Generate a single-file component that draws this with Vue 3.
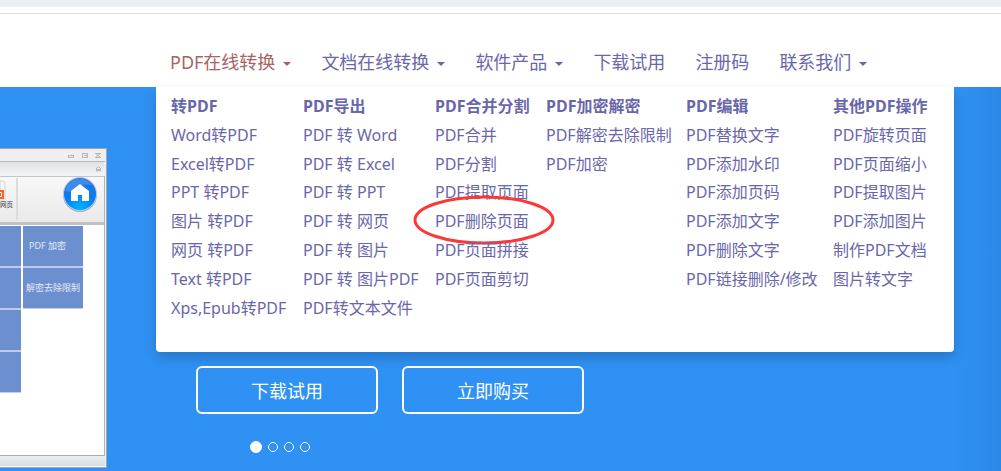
<script setup>
const navItems = [
  { label: 'PDF在线转换', caret: true, active: true },
  { label: '文档在线转换', caret: true },
  { label: '软件产品', caret: true },
  { label: '下载试用' },
  { label: '注册码' },
  { label: '联系我们', caret: true },
]

const columns = [
  {
    title: '转PDF',
    items: ['Word转PDF', 'Excel转PDF', 'PPT 转PDF', '图片 转PDF', '网页 转PDF', 'Text 转PDF', 'Xps,Epub转PDF'],
  },
  {
    title: 'PDF导出',
    items: ['PDF 转 Word', 'PDF 转 Excel', 'PDF 转 PPT', 'PDF 转 网页', 'PDF 转 图片', 'PDF 转 图片PDF', 'PDF转文本文件'],
  },
  {
    title: 'PDF合并分割',
    items: ['PDF合并', 'PDF分割', 'PDF提取页面', 'PDF删除页面', 'PDF页面拼接', 'PDF页面剪切'],
  },
  { title: 'PDF加密解密', items: ['PDF解密去除限制', 'PDF加密'] },
  {
    title: 'PDF编辑',
    items: ['PDF替换文字', 'PDF添加水印', 'PDF添加页码', 'PDF添加文字', 'PDF删除文字', 'PDF链接删除/修改'],
  },
  {
    title: '其他PDF操作',
    items: ['PDF旋转页面', 'PDF页面缩小', 'PDF提取图片', 'PDF添加图片', '制作PDF文档', '图片转文字'],
  },
]

const marked = 'PDF删除页面'
</script>

<template>
  <div class="page">
    <div class="topbar"></div>
    <header class="header">
      <nav class="nav">
        <a
          v-for="item in navItems"
          :key="item.label"
          href="#"
          class="nav-link"
          :class="{ active: item.active }"
        >{{ item.label }}<span v-if="item.caret" class="caret"></span></a>
        <div class="menu">
          <section v-for="col in columns" :key="col.title" class="menu-col">
            <h3 class="menu-title">{{ col.title }}</h3>
            <ul class="menu-list">
              <li v-for="item in col.items" :key="item" class="menu-item">
                <a href="#">{{ item }}</a>
                <svg v-if="item === marked" class="ring" width="142" height="50" viewBox="0 0 142 50" aria-hidden="true">
                  <ellipse cx="71" cy="25" rx="69" ry="23" fill="none" stroke="#fa3a38" stroke-width="3" />
                </svg>
              </li>
            </ul>
          </section>
        </div>
      </nav>
    </header>

    <main class="hero">
      <svg class="app-shot" width="107" height="320" viewBox="0 0 107 320" aria-hidden="true">
        <defs>
          <linearGradient id="strip" x1="0" y1="0" x2="0" y2="1">
            <stop offset="0" stop-color="#dfe2e6" />
            <stop offset="1" stop-color="#f4f5f7" />
          </linearGradient>
          <linearGradient id="tool" x1="0" y1="0" x2="0" y2="1">
            <stop offset="0" stop-color="#f8f8f8" />
            <stop offset="1" stop-color="#e9e9ea" />
          </linearGradient>
          <linearGradient id="status" x1="0" y1="0" x2="0" y2="1">
            <stop offset="0" stop-color="#e9edf0" />
            <stop offset="1" stop-color="#d8dfe4" />
          </linearGradient>
          <radialGradient id="ball" cx="0.5" cy="0.95" r="0.85">
            <stop offset="0" stop-color="#00b4ff" />
            <stop offset="0.6" stop-color="#0a7cf2" />
            <stop offset="1" stop-color="#1c74e4" />
          </radialGradient>
        </defs>
        <rect width="107" height="320" fill="#a3a7a9" />
        <rect y="1" width="106" height="318" fill="#efefef" />
        <rect y="13" width="105" height="1" fill="#b5b8bd" />
        <rect y="14" width="104" height="14" fill="url(#strip)" />
        <rect y="28" width="104" height="1" fill="#c3c5c9" />
        <rect y="29" width="104" height="46" fill="url(#tool)" />
        <rect x="16" y="30" width="2" height="42" fill="#dcdcdc" />
        <rect y="74" width="105" height="3" fill="#bfc1c5" />
        <rect y="77" width="104" height="230" fill="#fff" />
        <rect x="104" y="28" width="1" height="280" fill="#b2b4b5" />
        <rect y="307" width="105" height="1" fill="#a9aca8" />
        <rect y="308" width="105" height="10" fill="url(#status)" />
        <rect y="318" width="106" height="1" fill="#f7f7f7" />
        <g fill="none" stroke="#b4b5b7">
          <rect x="68.5" y="7.5" width="5" height="2" />
          <rect x="82.5" y="5.5" width="5" height="4" />
          <path d="M84 7.500h3M95.500 5.500l5 4M100.500 5.500l-5 4M95 5.500h6M95 9.500h6" />
          <path d="M96 21l2.500-2.500 2.500 2.500M96 21.500h5M96.500 21v2h1.500v-1.500h1v1.500h1.500v-2" />
        </g>
        <path d="M0 33h2q3 0 3 3v16H0z" fill="#f9f9f9" stroke="#d2d3d4" />
        <path d="M0 42h4v9H0z" fill="#ef6427" />
        <path d="M0 44.500h1.500v4H0" fill="none" stroke="#fff" />
        <text x="0" y="59" font-size="6.500" fill="#333">网页</text>
        <circle cx="80" cy="47" r="17" fill="#84909c" opacity="0.7" />
        <circle cx="80" cy="46" r="17" fill="#b5cbe6" />
        <circle cx="80" cy="46" r="16" fill="url(#ball)" />
        <path d="M65 43a15 15 0 0 1 27-6q-10-2-15 3t-12 3z" fill="#fff" opacity="0.17" />
        <path d="M80 36l9 7v10h-7v-6h-4v6h-7V43z" fill="#fff" />
        <g fill="#c0cdea">
          <rect y="78" width="21" height="41" />
          <rect y="119" width="21" height="42" />
          <rect y="161" width="21" height="42" />
          <rect y="203" width="21" height="42" />
          <rect x="23" y="78" width="60" height="41" />
          <rect x="23" y="119" width="60" height="42" />
        </g>
        <g fill="#6c90cf">
          <rect y="78" width="21" height="40" />
          <rect y="120" width="21" height="40" />
          <rect y="162" width="21" height="40" />
          <rect y="204" width="21" height="40" />
          <rect x="23" y="78" width="60" height="40" />
          <rect x="23" y="120" width="60" height="40" />
        </g>
        <g font-size="9" fill="#e3eaf8">
          <text x="29" y="101">PDF 加密</text>
          <text x="26" y="143">解密去除限制</text>
        </g>
      </svg>
      <div class="cta">
        <div class="buttons">
          <button type="button" class="btn">下载试用</button>
          <button type="button" class="btn">立即购买</button>
        </div>
        <div class="dots">
          <button
            v-for="n in 4"
            :key="n"
            type="button"
            class="dot"
            :class="{ on: n === 1 }"
            :aria-label="'第' + n + '张'"
          ></button>
        </div>
      </div>
    </main>
  </div>
</template>

<style>
body {
  margin: 0;
}
</style>

<style scoped>
.page {
  display: flex;
  flex-direction: column;
  min-height: 100vh;
  background: #fff;
  font-family: "Noto Sans", "Noto Sans CJK SC", sans-serif;
  color: #6967aa;
}

.topbar {
  height: 7px;
  background: #ebeef7;
}

.header {
  margin-top: 6px;
  border-top: 1px solid #dedede;
}

.nav {
  position: relative;
  display: flex;
  align-items: center;
  height: 73px;
  margin-left: 155px;
  padding-top: 22px;
  box-sizing: border-box;
}

.nav-link {
  display: flex;
  align-items: center;
  padding: 0 15px;
  font-size: 18px;
  line-height: 26px;
  color: inherit;
  text-decoration: none;
  white-space: nowrap;
}

.nav-link.active {
  color: #a76463;
}

.caret {
  margin: 4px 0 0 8px;
  border: 4px solid transparent;
  border-top-color: currentColor;
  border-bottom: 0;
}

.menu {
  position: absolute;
  z-index: 2;
  top: 100%;
  left: 1px;
  display: grid;
  grid-template-columns: 132px 132px 111px 140px 147px 121px;
  box-sizing: border-box;
  min-height: 265px;
  padding: 5px 0 28px 15px;
  background: #fff;
  border-radius: 0 0 4px 4px;
  box-shadow: 0 6px 12px rgba(0, 0, 0, 0.18);
  font-size: 16px;
  line-height: 1.8;
  white-space: nowrap;
}

.menu-title {
  margin: 0;
  font-size: 16px;
  font-weight: 700;
}

.menu-list {
  margin: 0;
  padding: 0;
  list-style: none;
}

.menu-item {
  position: relative;
}

.menu-item a {
  color: inherit;
  text-decoration: none;
}

.ring {
  position: absolute;
  top: -12px;
  left: -22px;
  pointer-events: none;
}

.hero {
  flex: 1;
  display: flex;
  align-items: flex-end;
  gap: 89px;
  padding-bottom: 3px;
  background: linear-gradient(to left, #2c88e6, #2f91f3 48px);
}

.app-shot {
  display: block;
  flex: none;
}

.cta {
  padding-bottom: 15px;
}

.buttons {
  display: flex;
  gap: 24px;
}

.btn {
  width: 182px;
  height: 48px;
  padding: 0;
  border: 2px solid #fff;
  border-radius: 6px;
  background: transparent;
  color: #fff;
  font-family: inherit;
  font-size: 18px;
}

.dots {
  display: flex;
  align-items: center;
  gap: 6px;
  margin: 27px 0 0 54px;
}

.dot {
  width: 10px;
  height: 10px;
  padding: 0;
  border: 1px solid #fff;
  border-radius: 50%;
  background: transparent;
}

.dot.on {
  width: 12px;
  height: 12px;
  background: #fff;
}
</style>
